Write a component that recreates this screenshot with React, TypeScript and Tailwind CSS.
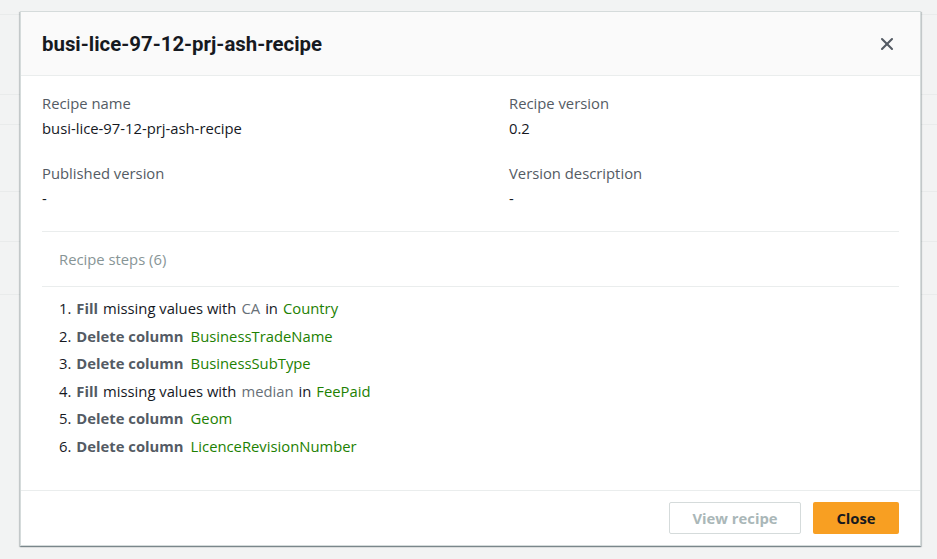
import { X } from "lucide-react";

type Part = { text: string; kind: "bold" | "plain" | "muted" | "col" };

const steps: Part[][] = [
  [
    { text: "Fill", kind: "bold" },
    { text: "missing values with", kind: "plain" },
    { text: "CA", kind: "muted" },
    { text: "in", kind: "plain" },
    { text: "Country", kind: "col" },
  ],
  [
    { text: "Delete column", kind: "bold" },
    { text: "BusinessTradeName", kind: "col" },
  ],
  [
    { text: "Delete column", kind: "bold" },
    { text: "BusinessSubType", kind: "col" },
  ],
  [
    { text: "Fill", kind: "bold" },
    { text: "missing values with", kind: "plain" },
    { text: "median", kind: "muted" },
    { text: "in", kind: "plain" },
    { text: "FeePaid", kind: "col" },
  ],
  [
    { text: "Delete column", kind: "bold" },
    { text: "Geom", kind: "col" },
  ],
  [
    { text: "Delete column", kind: "bold" },
    { text: "LicenceRevisionNumber", kind: "col" },
  ],
];

const partClass: Record<Part["kind"], string> = {
  bold: "font-bold text-[#545b64]",
  plain: "text-[#16191f]",
  muted: "text-[#687078]",
  col: "text-[#1d8102]",
};

function Field({ label, value }: { label: string; value: string }) {
  return (
    <div className="flex flex-col gap-[5px]">
      <span className="text-[14.8px] leading-[20px] text-[#545b64]">{label}</span>
      <span className="text-[14.8px] leading-[20px] text-[#16191f]">{value}</span>
    </div>
  );
}

export default function App() {
  return (
    <div
      className="relative h-[559px] w-[937px] overflow-hidden bg-[#f2f3f3]"
      style={{ fontFamily: "'Open Sans', 'Noto Sans', sans-serif" }}
    >
      {/* dimmed page behind the dialog */}
      <div className="flex flex-col">
        <div className="h-[15px] border-b border-[#e9ebeb]" />
        <div className="h-[80px] border-b border-[#e9ebeb]" />
        <div className="h-[30px] border-b border-[#e9ebeb]" />
        <div className="h-[67px] border-b border-[#e9ebeb]" />
        <div className="h-[50px] border-b border-[#e9ebeb]" />
        <div className="h-[53px] border-b border-[#e9ebeb]" />
      </div>

      <div className="absolute left-[20px] top-[11px] flex h-[535px] w-[901px] flex-col border border-[#d5dbdb] bg-white shadow-[0_1px_1px_0_rgba(0,28,36,0.3),1px_1px_1px_0_rgba(0,28,36,0.15),-1px_1px_1px_0_rgba(0,28,36,0.15)]">
        <div className="flex h-[64px] items-center justify-between border-b border-[#eaeded] bg-[#fafafa] pl-[21px] pr-[23px]">
          <h2
            className="text-[20.4px] font-bold leading-[24px] text-[#16191f]"
            style={{ fontFamily: "Roboto, 'Noto Sans', sans-serif" }}
          >
            busi-lice-97-12-prj-ash-recipe
          </h2>
          <X size={20} strokeWidth={2.5} className="text-[#545b64]" />
        </div>

        <div className="flex flex-1 flex-col px-[21px] pt-[17px]">
          <div className="grid grid-cols-[467px_1fr] gap-y-[25px]">
            <Field label="Recipe name" value="busi-lice-97-12-prj-ash-recipe" />
            <Field label="Recipe version" value="0.2" />
            <Field label="Published version" value="-" />
            <Field label="Version description" value="-" />
          </div>

          <div className="mt-[23px] border-t border-[#eaeded]">
            <div className="flex h-[55px] items-center border-b border-[#eaeded] pl-[17px] text-[14.8px] text-[#879596]">
              Recipe steps (6)
            </div>
            <ol className="flex flex-col gap-[7.5px] pl-[17px] pt-[11px]">
              {steps.map((parts, i) => (
                <li key={i} className="flex gap-[5px] text-[14.8px] leading-[20px] text-[#16191f]">
                  <span>{i + 1}.</span>
                  {parts.map((p, j) => (
                    <span
                      key={j}
                      className={`${partClass[p.kind]} ${p.kind === "col" && parts[j - 1]?.kind === "bold" ? "ml-[2px]" : ""}`}
                    >
                      {p.text}
                    </span>
                  ))}
                </li>
              ))}
            </ol>
          </div>
        </div>

        <div className="flex h-[55px] items-center justify-end gap-[12px] border-t border-[#eaeded] pr-[21px]">
          <button className="h-[32px] w-[132px] rounded-[2px] border border-[#d5dbdb] bg-white text-[14.8px] font-bold text-[#aab7b8]">
            View recipe
          </button>
          <button className="h-[32px] w-[86px] rounded-[2px] bg-[#f89f22] text-[14.8px] font-bold text-[#16191f]">
            Close
          </button>
        </div>
      </div>
    </div>
  );
}
